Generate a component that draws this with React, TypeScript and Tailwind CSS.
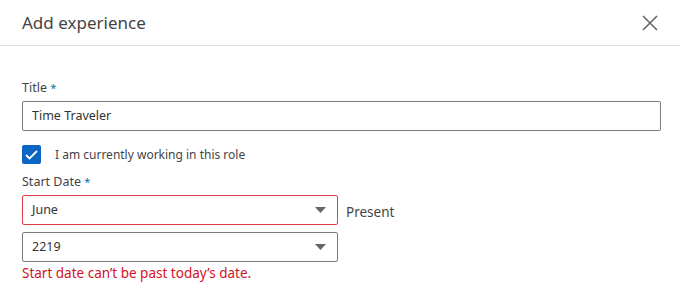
const font = { fontFamily: '"Noto Sans", "Open Sans", sans-serif' };

const Caret = () => (
  <svg width="11" height="6" viewBox="0 0 11 6" className="shrink-0">
    <path d="M0 0h11L5.5 6z" fill="#666" />
  </svg>
);

const Select = ({ value, error }: { value: string; error?: boolean }) => (
  <div
    className={`flex items-center justify-between w-[316px] h-[30px] rounded-[2px] border pl-[9px] pr-[11px] ${
      error ? 'border-[#e33d47]' : 'border-[#7a7a7a]'
    }`}
  >
    <span className="text-[12.5px] text-[#333]">{value}</span>
    <Caret />
  </div>
);

export default function App() {
  return (
    <div className="w-[680px] h-[297px] bg-white overflow-hidden" style={font}>
      <div className="flex items-center justify-between h-[46px] border-b border-[#e0e0e0] pl-[22px] pr-[22px]">
        <h2 className="text-[17px] text-[#444] leading-none">Add experience</h2>
        <svg width="16" height="16" viewBox="0 0 16 16">
          <path d="M1 1l14 14M15 1L1 15" stroke="#666" strokeWidth="1.6" />
        </svg>
      </div>

      <div className="px-[22px] pt-[33px]">
        <label className="block text-[12.5px] text-[#444] leading-[18px]">
          Title <span className="text-[#0073b1] text-[11px] align-top">*</span>
        </label>
        <div className="mt-[4px] flex items-center h-[30px] w-[639px] rounded-[2px] border border-[#7a7a7a] px-[9px]">
          <span className="text-[12.5px] text-[#333]">Time Traveler</span>
        </div>

        <div className="mt-[14px] flex items-center gap-[14px]">
          <div className="w-[19px] h-[19px] rounded-[2px] bg-[#0a66c2] flex items-center justify-center">
            <svg width="13" height="10" viewBox="0 0 13 10">
              <path d="M1 5l3.5 3.5L12 1" stroke="#fff" strokeWidth="1.8" fill="none" />
            </svg>
          </div>
          <span className="text-[12px] text-[#444]">I am currently working in this role</span>
        </div>

        <label className="mt-[9px] block text-[12.5px] text-[#444] leading-[18px]">
          Start Date <span className="text-[#0073b1] text-[11px] align-top">*</span>
        </label>
        <div className="mt-[4px] flex items-end gap-[8px]">
          <Select value="June" error />
          <span className="text-[13.5px] text-[#444] leading-none pb-[6px]">Present</span>
        </div>
        <div className="mt-[7px]">
          <Select value="2219" />
        </div>
        <p className="mt-[1px] text-[13.5px] text-[#d11124]">Start date can’t be past today’s date.</p>
      </div>
    </div>
  );
}
